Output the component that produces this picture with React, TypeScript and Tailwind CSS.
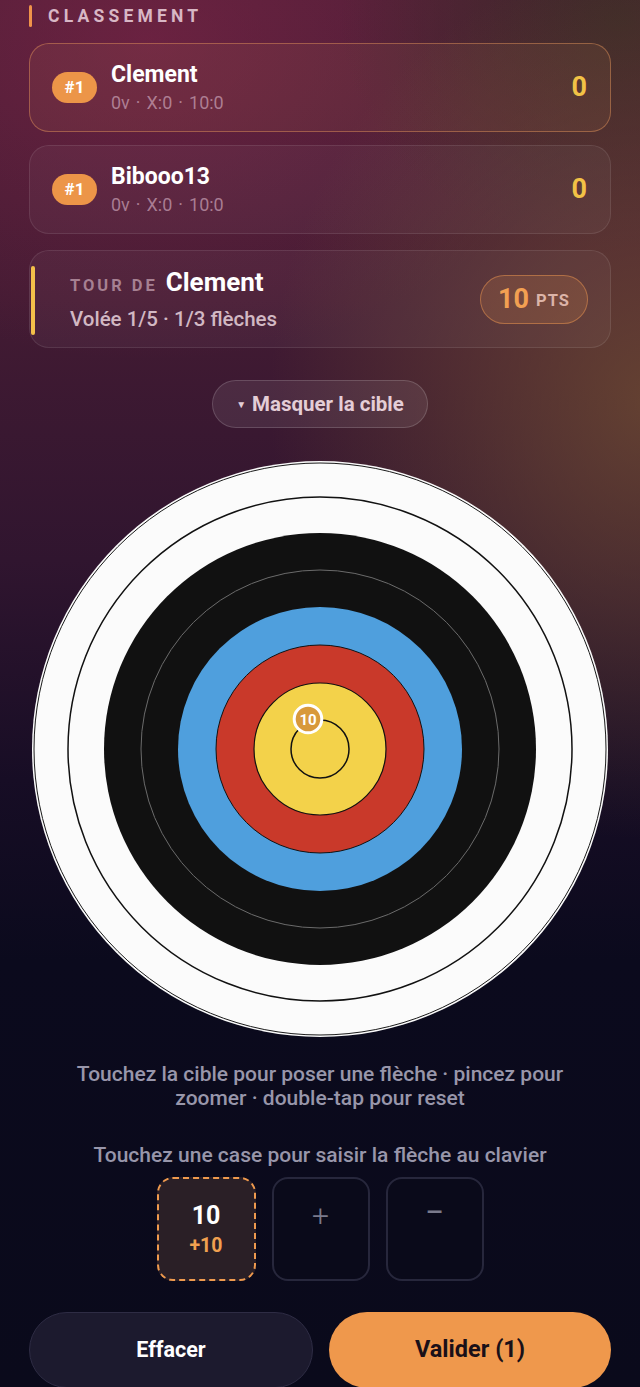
import React from "react";

function Target() {
  return (
    <svg width="576" height="576" viewBox="0 0 576 576" className="block">
      <circle cx="288" cy="288" r="288" fill="#fbfbfb" />
      <circle cx="288" cy="288" r="286" fill="none" stroke="#1a1a1a" strokeWidth="1" />
      <circle cx="288" cy="288" r="252" fill="none" stroke="#111" strokeWidth="1.5" />
      <circle cx="288" cy="288" r="216" fill="#111111" />
      <circle cx="288" cy="288" r="179" fill="none" stroke="#6b6b6b" strokeWidth="1" />
      <circle cx="288" cy="288" r="142" fill="#4f9fdd" />
      <circle cx="288" cy="288" r="104" fill="#c9392a" stroke="#111" strokeWidth="1" />
      <circle cx="288" cy="288" r="66" fill="#f3d24a" stroke="#111" strokeWidth="1.2" />
      <circle cx="288" cy="288" r="29" fill="none" stroke="#111" strokeWidth="1.5" />
      <circle cx="276" cy="258" r="13.8" fill="#d8993b" stroke="#ffffff" strokeWidth="3" />
      <text
        x="276"
        y="263.5"
        textAnchor="middle"
        fontFamily="Roboto, sans-serif"
        fontWeight="700"
        fontSize="15"
        fill="#ffffff"
      >
        10
      </text>
    </svg>
  );
}

function Sep() {
  return <span className="mx-[6px]">·</span>;
}

function PlayerCard({ name, active }: { name: string; active?: boolean }) {
  return (
    <div
      className={
        "flex h-[89px] items-center rounded-[20px] border pl-[22px] pr-[22px] " +
        (active
          ? "border-[rgba(232,150,90,0.45)] bg-[rgba(255,180,120,0.07)]"
          : "border-[rgba(255,255,255,0.09)] bg-[rgba(255,255,255,0.04)]")
      }
    >
      <div className="flex h-[31px] w-[45px] items-center justify-center rounded-full bg-[#ec9548] text-[17px] font-bold text-white">
        #1
      </div>
      <div className="ml-[14px] flex flex-1 flex-col gap-[3px]">
        <div className="text-[23px] font-bold leading-[28px] text-white">{name}</div>
        <div className="text-[18px] leading-[22px] text-[rgba(200,160,180,0.72)]">
          0v<Sep />X:0<Sep />10:0
        </div>
      </div>
      <div className="pr-[1px] text-[27px] font-bold text-[#f2c246]">0</div>
    </div>
  );
}

export default function App() {
  return (
    <div
      className="min-h-[1387px] w-[640px] overflow-hidden bg-[radial-gradient(ellipse_380px_440px_at_650px_400px,rgba(115,80,50,0.72),transparent),radial-gradient(ellipse_280px_230px_at_620px_20px,rgba(60,45,38,0.85),transparent),radial-gradient(ellipse_440px_320px_at_150px_40px,rgba(150,40,80,0.42),transparent),linear-gradient(180deg,#4c1e36_0px,#431b33_300px,#30152f_560px,#170d25_780px,#0b0a1d_960px,#0a0a1b_1387px)] text-white"
      style={{ fontFamily: "Roboto, 'Noto Sans', sans-serif" }}
    >
      <div className="px-[29px] pt-[5px]">
        <div className="flex h-[22px] items-center gap-[16px]">
          <div className="h-[22px] w-[3px] rounded-full bg-[#f0934a]" />
          <div className="text-[17.5px] font-bold tracking-[0.24em] text-[#d8b7c5]">CLASSEMENT</div>
        </div>

        <div className="mt-[16px]">
          <PlayerCard name="Clement" active />
        </div>
        <div className="mt-[13px]">
          <PlayerCard name="Bibooo13" />
        </div>

        <div className="relative mt-[16px] flex h-[98px] items-center rounded-[20px] border border-[rgba(255,255,255,0.09)] bg-[rgba(255,255,255,0.04)] pl-[40px] pr-[22px]">
          <div className="absolute bottom-[12px] left-[1px] top-[15px] w-[4px] rounded-full bg-[#f4c04a]" />
          <div className="flex flex-1 flex-col gap-[6px]">
            <div className="flex items-baseline leading-[30px]">
              <span className="text-[16.5px] font-bold tracking-[0.18em] text-[rgba(200,165,180,0.72)]">TOUR DE</span>
              <span className="ml-[8px] text-[26px] font-bold text-white">Clement</span>
            </div>
            <div className="text-[20.5px] font-medium leading-[25px] text-[#d2b8c3]">
              Volée 1/5 · 1/3 flèches
            </div>
          </div>
          <div className="flex h-[49px] w-[108px] items-center justify-center gap-[7px] rounded-full border border-[rgba(235,150,80,0.5)] bg-[rgba(235,150,80,0.16)]">
            <span className="text-[27px] font-bold text-[#f2a052]">10</span>
            <span className="mt-[4px] text-[16.5px] font-bold tracking-[0.06em] text-[#dcb4a8]">PTS</span>
          </div>
        </div>

        <div className="mt-[32px] flex justify-center">
          <div className="flex h-[48px] w-[216px] items-center justify-center gap-[6px] rounded-full border border-[rgba(255,255,255,0.16)] bg-[rgba(255,255,255,0.08)] text-[20.5px] font-bold text-[#e4cdd6]">
            <span className="text-[10px]">▼</span>
            <span>Masquer la cible</span>
          </div>
        </div>
      </div>

      <div className="mt-[33px] flex justify-center">
        <Target />
      </div>

      <div className="mt-[25px] text-center text-[21px] font-medium leading-[24px] text-[#9896aa]">
        Touchez la cible pour poser une flèche · pincez pour
        <br />
        zoomer · double-tap pour reset
      </div>

      <div className="mt-[33px] text-center text-[21px] font-medium leading-[24px] text-[#9896aa]">
        Touchez une case pour saisir la flèche au clavier
      </div>

      <div className="mt-[10px] flex justify-center gap-[16px]">
        <div className="flex h-[104px] w-[99px] flex-col items-center justify-center rounded-[16px] border-2 border-dashed border-[#ef9a4e] bg-[#2a1f26]">
          <span className="text-[25px] font-bold leading-[30px] text-white">10</span>
          <span className="mt-[4px] text-[19.5px] font-bold leading-[22px] text-[#f0a050]">+10</span>
        </div>
        <div className="flex h-[104px] w-[98px] justify-center rounded-[16px] border-2 border-[#27273c] bg-[#0a0a1a] pt-[22px] text-[30px] font-light leading-[30px] text-[#7a7a8c]">
          +
        </div>
        <div className="flex h-[104px] w-[98px] justify-center rounded-[16px] border-2 border-[#27273c] bg-[#0a0a1a] pt-[18px] text-[34px] leading-[30px] text-[#7a7a8c]">
          −
        </div>
      </div>

      <div className="mt-[31px] flex gap-[16px] px-[29px]">
        <div className="flex h-[76px] flex-1 items-center justify-center rounded-full border border-[#2e2c44] bg-[#1c1a2e] text-[21.5px] font-bold text-white">
          Effacer
        </div>
        <div className="flex h-[76px] flex-1 items-center justify-center rounded-full bg-[#ef984c] text-[23.5px] font-bold text-[#1a1018]">
          Valider (1)
        </div>
      </div>
    </div>
  );
}
